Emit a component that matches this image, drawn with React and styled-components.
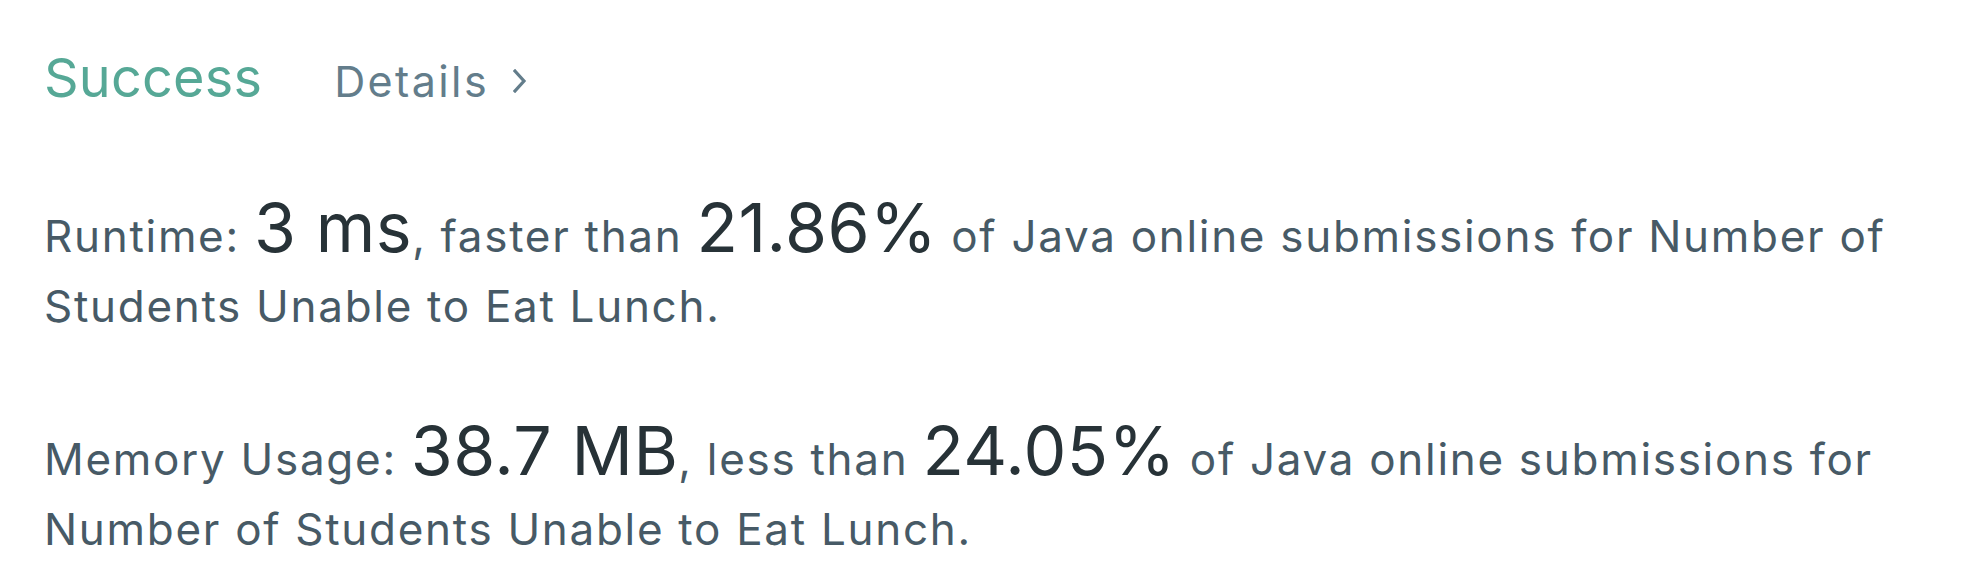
import React from 'react';
import styled, { createGlobalStyle } from 'styled-components';

const GlobalStyle = createGlobalStyle`
  html, body {
    margin: 0;
    padding: 0;
    background: #fff;
  }
  body {
    font-family: Inter, "Noto Sans", sans-serif;
    -webkit-font-smoothing: antialiased;
  }
`;

const Page = styled.div`
  box-sizing: border-box;
  padding: 43px 40px 0 44px;
  width: 1972px;
`;

const Header = styled.div`
  align-items: baseline;
  display: flex;
  height: 70px;
  line-height: 70px;
`;

const Status = styled.span`
  color: #56a896;
  font-size: 54px;
  font-weight: 400;
  letter-spacing: 0.2px;
  margin-right: 72px;
`;

const DetailsLink = styled.a`
  align-items: center;
  color: #637d8b;
  cursor: pointer;
  display: inline-flex;
  font-size: 43px;
  gap: 24px;
  letter-spacing: 2.4px;
  text-decoration: none;
`;

const Chevron = () => (
  <svg width="14" height="24" viewBox="0 0 14 24" fill="none">
    <path d="M2 2 L11 12 L2 22" stroke="#637d8b" strokeWidth="3.2" strokeLinecap="square" />
  </svg>
);

const Stat = styled.p`
  color: #475a66;
  font-size: 44px;
  letter-spacing: 1.7px;
  line-height: 70px;
  margin: 0;
  margin-top: ${(p) => p.$gap}px;
  max-width: 1900px;
`;

const Big = styled.span`
  color: #273237;
  font-size: 68px;
  letter-spacing: 0.4px;
  line-height: 52px;
`;

const App = () => {
  return (
    <Page>
      <GlobalStyle />
      <Header>
        <Status>Success</Status>
        <DetailsLink>
          Details
          <Chevron />
        </DetailsLink>
      </Header>
      <Stat $gap={88}>
        Runtime: <Big>3 ms</Big>, faster than <Big>21.86%</Big> of Java online submissions for Number of Students Unable to Eat Lunch.
      </Stat>
      <Stat $gap={83}>
        Memory Usage: <Big>38.7 MB</Big>, less than <Big>24.05%</Big> of Java online submissions for Number of Students Unable to Eat Lunch.
      </Stat>
    </Page>
  );
};

export default App;
